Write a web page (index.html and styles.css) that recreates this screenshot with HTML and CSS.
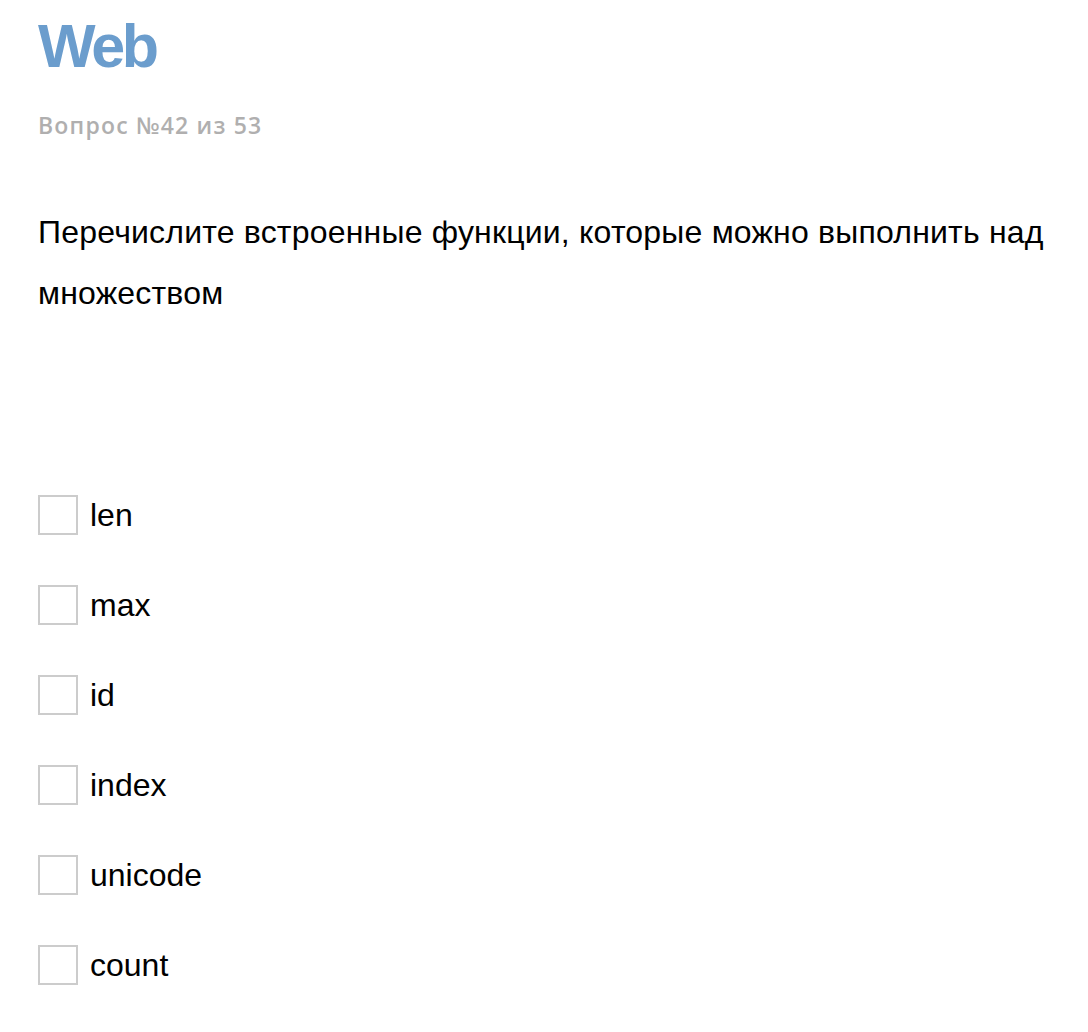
FILE: index.html
```html
<!DOCTYPE html>
<html lang="ru">
<head>
<meta charset="utf-8">
<link rel="stylesheet" href="styles.css">
</head>
<body>
<div class="page">
  <h1 class="title">Web</h1>
  <div class="counter">Вопрос №42 из 53</div>
  <p class="question">Перечислите встроенные функции, которые можно выполнить над множеством</p>
  <ul class="answers">
    <li class="answer"><span class="box"></span><span class="label">len</span></li>
    <li class="answer"><span class="box"></span><span class="label">max</span></li>
    <li class="answer"><span class="box"></span><span class="label">id</span></li>
    <li class="answer"><span class="box"></span><span class="label">index</span></li>
    <li class="answer"><span class="box"></span><span class="label">unicode</span></li>
    <li class="answer"><span class="box"></span><span class="label">count</span></li>
  </ul>
</div>
</body>
</html>
```

FILE: styles.css
```css
html, body {
  margin: 0;
  padding: 0;
  background: #fff;
}
.page {
  padding: 14px 38px 0 38px;
  font-family: "Liberation Sans", Arial, sans-serif;
}
.title {
  margin: 0;
  font-size: 61px;
  line-height: 64px;
  font-weight: bold;
  color: #6b9dcd;
  letter-spacing: -3.3px;
}
.counter {
  margin-top: 32px;
  font-family: "Open Sans", sans-serif;
  font-weight: 600;
  font-size: 23px;
  line-height: 30px;
  letter-spacing: 1.2px;
  color: #b0afaf;
}
.question {
  margin: 62px 0 0 0;
  font-size: 32px;
  line-height: 61px;
  letter-spacing: 0.2px;
  color: #000;
}
.answers {
  list-style: none;
  margin: 171px 0 0 0;
  padding: 0;
  display: flex;
  flex-direction: column;
  gap: 50px;
}
.answer {
  display: flex;
  align-items: center;
  gap: 12px;
  height: 40px;
}
.box {
  width: 36px;
  height: 36px;
  border: 2px solid #cccccc;
  flex: none;
}
.label {
  font-size: 32px;
  color: #000;
}
```
